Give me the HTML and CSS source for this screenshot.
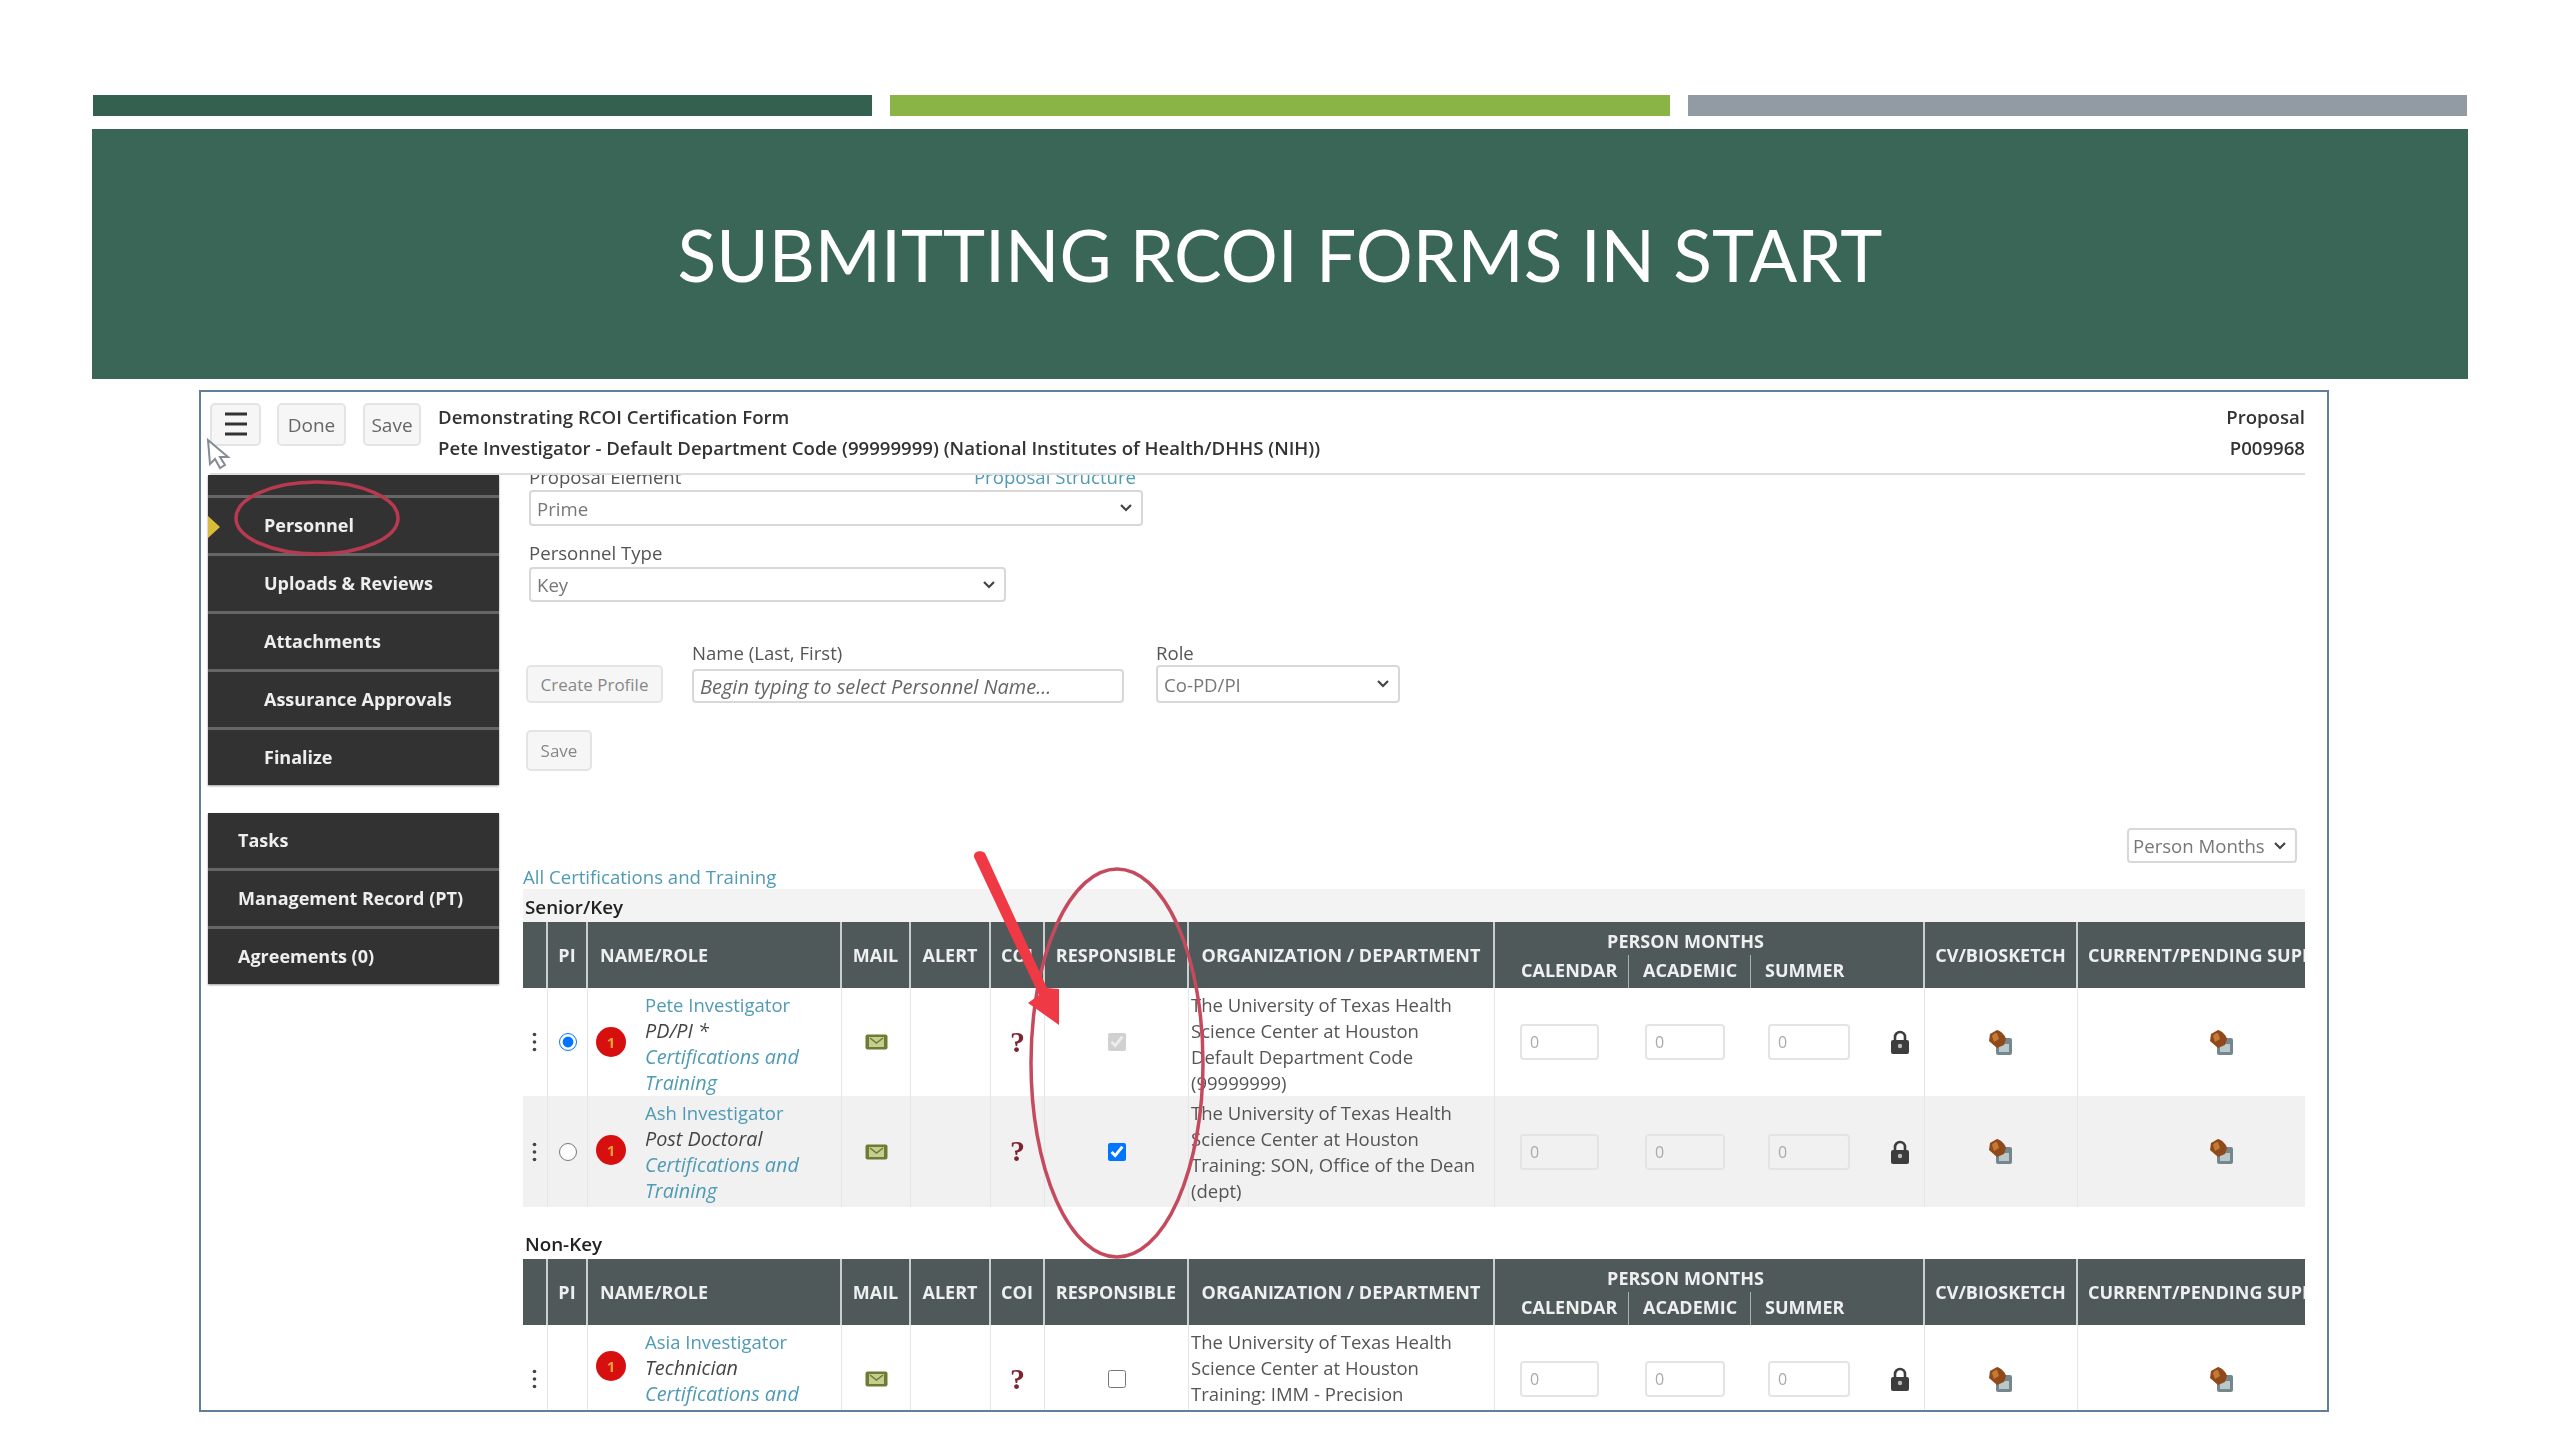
FILE: index.html
```html
<!DOCTYPE html>
<html lang="en">
<head>
    <meta charset="UTF-8">
    <title>Submitting RCOI Forms in START</title>
    <link rel="stylesheet" href="styles.css">
</head>
<body>
<svg class="defs" width="0" height="0">
    <symbol id="dots" viewBox="0 0 6 24"><circle cx="3" cy="3" r="2.2"/><circle cx="3" cy="12" r="2.2"/><circle cx="3" cy="21" r="2.2"/></symbol>
    <symbol id="mail" viewBox="0 0 23 16"><rect x="0.5" y="0.5" width="22" height="15" rx="2" fill="#6f7a35"/><rect x="4" y="3" width="15" height="10" fill="#c3cf8e"/><path d="M5 4l6.500 5 6.500-5" fill="none" stroke="#6f7a35" stroke-width="1.500"/></symbol>
    <symbol id="lock" viewBox="0 0 20 24"><path d="M5 11V7a5 5 0 0 1 10 0v4" fill="none" stroke="#3d3d3d" stroke-width="2.600"/><rect x="1" y="10" width="18" height="14" rx="2" fill="#3d3d3d"/><circle cx="10" cy="16" r="2.200" fill="#bbb"/></symbol>
    <symbol id="bio" viewBox="0 0 25 25"><rect x="7" y="8" width="16" height="17" rx="2" fill="#75878c"/><rect x="10" y="14" width="10" height="8" fill="#b9c8ca"/><path d="M8 0c4 1 8 5 9 9l-2 6-7 3-8-7 1-7z" fill="#8f4a1c"/><path d="M3 6c1-2 3-3 5-3l2 6-5 3z" fill="#c67a35"/></symbol>
</svg>
<div class="slide">
    <div class="bars">
        <div class="bar bar-dark"></div>
        <div class="bar bar-green"></div>
        <div class="bar bar-gray"></div>
    </div>
    <div class="banner"><h1>SUBMITTING RCOI FORMS IN START</h1></div>

    <div class="frame">
        <div class="topbar">
            <button class="btn btn-menu"><svg width="24" height="26" viewBox="0 0 24 26"><path d="M1 3h22M1 13h22M1 23h22" stroke="#333" stroke-width="3"/></svg></button>
            <button class="btn btn-done">Done</button>
            <button class="btn btn-save">Save</button>
            <div class="crumbs">
                <div>Demonstrating RCOI Certification Form</div>
                <div>Pete Investigator - Default Department Code (99999999) (National Institutes of Health/DHHS (NIH))</div>
            </div>
            <div class="crumbs crumbs-right">
                <div>Proposal</div>
                <div>P009968</div>
            </div>
        </div>

        <div class="workspace">
            <div class="sidebar">
                <ul class="nav">
                    <li class="nav-stub"></li>
                    <li class="selected">Personnel</li>
                    <li>Uploads &amp; Reviews</li>
                    <li>Attachments</li>
                    <li>Assurance Approvals</li>
                    <li>Finalize</li>
                </ul>
                <ul class="nav nav-lower">
                    <li>Tasks</li>
                    <li>Management Record (PT)</li>
                    <li>Agreements (0)</li>
                </ul>
            </div>

            <div class="main">
                <div class="form">
                    <div class="label-row">
                        <label>Proposal Element</label>
                        <a href="#">Proposal Structure</a>
                    </div>
                    <select class="select select-element"><option>Prime</option></select>
                    <label class="label-type">Personnel Type</label>
                    <select class="select select-type"><option>Key</option></select>
                    <div class="add-row">
                        <button class="btn btn-profile">Create Profile</button>
                        <div class="field">
                            <label>Name (Last, First)</label>
                            <input class="name-input" placeholder="Begin typing to select Personnel Name...">
                        </div>
                        <div class="field field-role">
                            <label>Role</label>
                            <select class="select select-role"><option>Co-PD/PI</option></select>
                        </div>
                    </div>
                    <button class="btn btn-add">Save</button>
                </div>

                <div class="units"><select class="select select-units"><option>Person Months</option></select></div>
                <a class="all-link" href="#">All Certifications and Training</a>

                <div class="band">Senior/Key</div>
                <table class="people">
                    <colgroup>
                        <col class="c-drag"><col class="c-pi"><col class="c-name"><col class="c-mail"><col class="c-alert"><col class="c-coi"><col class="c-resp"><col class="c-org"><col class="c-cal"><col class="c-aca"><col class="c-sum"><col class="c-lock"><col class="c-cv"><col class="c-cur">
                    </colgroup>
                    <thead>
                        <tr>
                            <th rowspan="2"></th><th rowspan="2">PI</th><th rowspan="2" class="th-name">NAME/ROLE</th><th rowspan="2">MAIL</th><th rowspan="2">ALERT</th><th rowspan="2">COI</th><th rowspan="2">RESPONSIBLE</th><th rowspan="2">ORGANIZATION / DEPARTMENT</th>
                            <th colspan="4" class="th-months">PERSON MONTHS</th>
                            <th rowspan="2">CV/BIOSKETCH</th><th rowspan="2" class="th-cur">CURRENT/PENDING SUPPORT</th>
                        </tr>
                        <tr class="sub">
                            <th class="th-sep">CALENDAR</th><th class="th-sep">ACADEMIC</th><th class="th-plain">SUMMER</th><th class="th-end"></th>
                        </tr>
                    </thead>
                    <tbody>
                        <tr class="row-a">
                            <td class="mid"><svg class="ico-dots"><use href="#dots"/></svg></td>
                            <td class="mid"><input type="radio" name="pi1" checked></td>
                            <td><div class="who"><span class="alert">1</span><div><a href="#">Pete Investigator</a><br><i>PD/PI *</i><br><a class="cert" href="#">Certifications and<br>Training</a></div></div></td>
                            <td class="mid"><svg class="ico-mail"><use href="#mail"/></svg></td>
                            <td></td>
                            <td class="mid"><span class="coi">?</span></td>
                            <td class="mid"><input type="checkbox" checked disabled></td>
                            <td class="org">The University of Texas Health Science Center at Houston<br>Default Department Code (99999999)</td>
                            <td class="mo mo-cal"><input value="0" readonly></td>
                            <td class="mo mo-aca"><input value="0" readonly></td>
                            <td class="mo mo-sum"><input value="0" readonly></td>
                            <td class="mid"><svg class="ico-lock"><use href="#lock"/></svg></td>
                            <td class="mid"><svg class="ico-bio"><use href="#bio"/></svg></td>
                            <td class="mid cur"><svg class="ico-bio"><use href="#bio"/></svg></td>
                        </tr>
                        <tr class="row-b">
                            <td class="mid"><svg class="ico-dots"><use href="#dots"/></svg></td>
                            <td class="mid"><input type="radio" name="pi1"></td>
                            <td><div class="who"><span class="alert">1</span><div><a href="#">Ash Investigator</a><br><i>Post Doctoral</i><br><a class="cert" href="#">Certifications and<br>Training</a></div></div></td>
                            <td class="mid"><svg class="ico-mail"><use href="#mail"/></svg></td>
                            <td></td>
                            <td class="mid"><span class="coi">?</span></td>
                            <td class="mid"><input type="checkbox" checked></td>
                            <td class="org">The University of Texas Health Science Center at Houston<br>Training: SON, Office of the Dean (dept)</td>
                            <td class="mo mo-cal"><input value="0" readonly></td>
                            <td class="mo mo-aca"><input value="0" readonly></td>
                            <td class="mo mo-sum"><input value="0" readonly></td>
                            <td class="mid"><svg class="ico-lock"><use href="#lock"/></svg></td>
                            <td class="mid"><svg class="ico-bio"><use href="#bio"/></svg></td>
                            <td class="mid cur"><svg class="ico-bio"><use href="#bio"/></svg></td>
                        </tr>
                    </tbody>
                </table>

                <div class="band-plain">Non-Key</div>
                <table class="people">
                    <colgroup>
                        <col class="c-drag"><col class="c-pi"><col class="c-name"><col class="c-mail"><col class="c-alert"><col class="c-coi"><col class="c-resp"><col class="c-org"><col class="c-cal"><col class="c-aca"><col class="c-sum"><col class="c-lock"><col class="c-cv"><col class="c-cur">
                    </colgroup>
                    <thead>
                        <tr>
                            <th rowspan="2"></th><th rowspan="2">PI</th><th rowspan="2" class="th-name">NAME/ROLE</th><th rowspan="2">MAIL</th><th rowspan="2">ALERT</th><th rowspan="2">COI</th><th rowspan="2">RESPONSIBLE</th><th rowspan="2">ORGANIZATION / DEPARTMENT</th>
                            <th colspan="4" class="th-months">PERSON MONTHS</th>
                            <th rowspan="2">CV/BIOSKETCH</th><th rowspan="2" class="th-cur">CURRENT/PENDING SUPPORT</th>
                        </tr>
                        <tr class="sub">
                            <th class="th-sep">CALENDAR</th><th class="th-sep">ACADEMIC</th><th class="th-plain">SUMMER</th><th class="th-end"></th>
                        </tr>
                    </thead>
                    <tbody>
                        <tr class="row-a">
                            <td class="mid"><svg class="ico-dots"><use href="#dots"/></svg></td>
                            <td class="mid"></td>
                            <td><div class="who"><span class="alert">1</span><div><a href="#">Asia Investigator</a><br><i>Technician</i><br><a class="cert" href="#">Certifications and</a></div></div></td>
                            <td class="mid"><svg class="ico-mail"><use href="#mail"/></svg></td>
                            <td></td>
                            <td class="mid"><span class="coi">?</span></td>
                            <td class="mid"><input type="checkbox"></td>
                            <td class="org">The University of Texas Health Science Center at Houston<br>Training: IMM - Precision</td>
                            <td class="mo mo-cal"><input value="0" readonly></td>
                            <td class="mo mo-aca"><input value="0" readonly></td>
                            <td class="mo mo-sum"><input value="0" readonly></td>
                            <td class="mid"><svg class="ico-lock"><use href="#lock"/></svg></td>
                            <td class="mid"><svg class="ico-bio"><use href="#bio"/></svg></td>
                            <td class="mid cur"><svg class="ico-bio"><use href="#bio"/></svg></td>
                        </tr>
                    </tbody>
                </table>
            </div>
        </div>
    </div>

    <!-- hand drawn marks from the slide, same coordinates as the page -->
    <svg class="marks" viewBox="0 0 2560 1440">
        <ellipse cx="317" cy="518" rx="81" ry="36" fill="none" stroke="#b93a50" stroke-width="3.500"/>
        <ellipse cx="1117" cy="1063" rx="86" ry="194" fill="none" stroke="#c64a5e" stroke-width="3.500"/>
        <path d="M974 857c-1-5 6-8 11-4l62 135 12 1v36l-31-22 11-8z" fill="#ef3a45"/>
        <path d="M208 440l2 24 5-5 5 9 5-3-5-8h8z" fill="#fff" stroke="#858b92" stroke-width="2"/>
    </svg>
</div>
</body>
</html>
```

FILE: styles.css
```css
* {
    margin: 0;
    padding: 0;
    box-sizing: border-box;
}
ul,li {
    list-style-type: none;
}
body {
    background: #fff;
    font-family: "Open Sans", "Liberation Sans", sans-serif;
    color: #444;
}
.defs {
    position: absolute;
}
.slide {
    position: relative;
    width: 2560px;
    height: 1440px;
    padding-top: 95px;
    overflow: hidden;
    filter: blur(0.7px);
}
/*top stripes*/
.bars {
    display: flex;
    gap: 18px;
    padding: 0 93px;
}
.bar {
    flex: 1;
    height: 21px;
}
.bar-dark { background: #33604f; }
.bar-green { background: #8ab446; }
.bar-gray { background: #929ba3; }

.banner {
    display: flex;
    align-items: center;
    justify-content: center;
    margin: 13px 92px 0;
    height: 250px;
    background: #396656;
}
.banner h1 {
    font-family: "Lato", "Liberation Sans", sans-serif;
    font-weight: 400;
    font-size: 71.3px;
    color: #fff;
    white-space: nowrap;
}

/*screenshot frame*/
.frame {
    margin: 11px 0 0 199px;
    width: 2130px;
    height: 1022px;
    border: 2px solid #5f7f9a;
    overflow: hidden;
    background: #fff;
}
.topbar {
    position: relative;
    z-index: 2;
    display: flex;
    align-items: flex-start;
    height: 83px;
    margin: 0 22px 0 9px;
    padding-top: 11px;
    border-bottom: 2px solid #dedede;
    background: #fff;
}
.btn {
    height: 43px;
    border: 2px solid #e4e4e4;
    border-radius: 5px;
    background: #f6f6f6;
    font-family: inherit;
    font-size: 19px;
    color: #666;
}
.btn-menu { width: 51px; padding-top: 4px; }
.btn-done { width: 69px; margin-left: 16px; }
.btn-save { width: 58px; margin-left: 17px; }
.crumbs {
    margin: -2px 0 0 17px;
    font-size: 18.6px;
    font-weight: 600;
    line-height: 31px;
    color: #333;
}
.crumbs-right {
    margin-left: auto;
    text-align: right;
}

.workspace {
    display: grid;
    grid-template-columns: 298px 1fr;
}
/*left menu*/
.sidebar {
    padding-left: 7px;
}
.nav {
    background: #323232;
    color: #eee;
    font-size: 18px;
    font-weight: 700;
    box-shadow: 0 1px 2px #999;
}
.nav li {
    position: relative;
    display: flex;
    align-items: center;
    height: 58px;
    padding: 0 0 2px 56px;
    border-top: 3px solid #666;
}
.nav .nav-stub {
    height: 20px;
    border-top: 0;
}
.nav .selected::before {
    content: "";
    position: absolute;
    left: 0;
    top: 18px;
    border-left: 12px solid #d8bd3a;
    border-top: 11px solid transparent;
    border-bottom: 11px solid transparent;
}
.nav-lower {
    margin-top: 28px;
}
.nav-lower li {
    padding-left: 30px;
}
.nav-lower li:first-child {
    height: 55px;
    border-top: 0;
}

/*form area*/
.main {
    min-width: 0;
    padding: 0 22px 0 24px;
    overflow: hidden;
}
.form {
    padding-left: 6px;
    font-size: 18.6px;
    line-height: 20px;
    color: #555;
}
.form a, .all-link {
    color: #4f9ab5;
    text-decoration: none;
}
.label-row {
    display: flex;
    justify-content: space-between;
    width: 608px;
    margin-top: -8px;
    padding-right: 1px;
}
.select {
    display: block;
    appearance: none;
    padding-left: 6px;
    border: 2px solid #d8d8d8;
    border-radius: 4px;
    background: #fff url("data:image/svg+xml,%3Csvg xmlns='http://www.w3.org/2000/svg' width='12' height='8'%3E%3Cpath d='M1 1l5 5 5-5' fill='none' stroke='%23444' stroke-width='2.200'/%3E%3C/svg%3E") no-repeat right 9px center;
    font-family: inherit;
    font-size: 18.6px;
    color: #777;
}
.select-element { width: 614px; height: 36px; margin-top: 3px; }
.label-type { display: block; margin-top: 17px; }
.select-type { width: 477px; height: 35px; margin-top: 4px; }
.add-row {
    display: flex;
    align-items: flex-end;
    margin-top: 41px;
}
.field label {
    display: block;
    margin-bottom: 6px;
}
.btn-profile {
    width: 137px;
    height: 38px;
    margin: 0 29px 0 -3px;
    font-size: 17px;
    color: #888;
}
.name-input {
    display: block;
    width: 432px;
    height: 34px;
    padding-left: 6px;
    border: 2px solid #d8d8d8;
    border-radius: 4px;
    font-family: inherit;
    font-size: 20px;
    font-style: italic;
}
.name-input::placeholder {
    color: #666;
    opacity: 1;
}
.field-role { margin-left: 32px; }
.field-role label { margin-bottom: 2px; }
.select-role { width: 244px; height: 38px; }
.btn-add {
    display: block;
    width: 66px;
    height: 41px;
    margin: 27px 0 0 -3px;
    font-size: 17px;
    color: #888;
}
.units {
    display: flex;
    justify-content: flex-end;
    margin: 57px 8px 0 0;
}
.select-units { width: 170px; height: 35px; padding-left: 4px; }
.all-link {
    display: block;
    margin-top: 4px;
    font-size: 18.6px;
    line-height: 20px;
}
.band {
    height: 33px;
    margin-top: 2px;
    padding: 8px 0 0 2px;
    background: #f3f3f3;
    font-size: 18.8px;
    font-weight: 600;
    line-height: 20px;
    color: #222;
}
.band-plain {
    height: 25px;
    margin-top: 27px;
    padding-left: 2px;
    font-size: 18.8px;
    font-weight: 600;
    line-height: 20px;
    color: #222;
}

/*personnel tables*/
.people {
    table-layout: fixed;
    width: 1782px;
    border-collapse: separate;
    border-spacing: 0;
    font-size: 18.5px;
    line-height: 26px;
}
.c-drag { width: 25px; }
.c-pi { width: 40px; }
.c-name { width: 254px; }
.c-mail { width: 69px; }
.c-alert { width: 80px; }
.c-coi { width: 54px; }
.c-resp { width: 144px; }
.c-org { width: 306px; }
.c-cal { width: 134px; }
.c-aca { width: 122px; }
.c-sum { width: 125px; }
.c-lock { width: 49px; }
.c-cv { width: 153px; }
.c-cur { width: 227px; }
.people th {
    background: #4f5959;
    color: #eef0f0;
    font-size: 18px;
    font-weight: 700;
    line-height: 20px;
    white-space: nowrap;
    overflow: hidden;
    border-right: 2px solid #c9cfcf;
}
.people th:last-child {
    border-right: 0;
}
.people .sub th {
    height: 33px;
    text-align: left;
    padding: 0 0 4px 26px;
    border-right: 0;
}
.people .sub th + th {
    padding-left: 14px;
}
.people .th-sep {
    box-shadow: inset -1px 0 0 #a8b0b0;
}
.people .sub .th-end {
    border-right: 2px solid #c9cfcf;
}
.people .th-months {
    height: 33px;
    padding-top: 4px;
    padding-right: 47px;
    border-right: 2px solid #c9cfcf;
}
.people .th-name {
    text-align: left;
    padding-left: 12px;
}
.people .th-cur {
    text-align: left;
    padding-left: 10px;
}
.people td {
    vertical-align: top;
    padding-top: 4px;
    border-right: 1px solid #e6e6e6;
    overflow: hidden;
}
.people td:last-child {
    border-right: 0;
}
.row-a { height: 108px; }
.row-b { height: 111px; background: #f1f1f1; }
.people .mid {
    vertical-align: middle;
    padding-top: 0;
    text-align: center;
}
.people .cur {
    padding-left: 62px;
}
.who {
    display: flex;
    align-items: center;
    gap: 19px;
    padding-left: 8px;
}
.who a {
    color: #4f9ab5;
    text-decoration: none;
}
.who .cert, .who i {
    font-size: 19.8px;
    font-style: italic;
}
.who i {
    color: #444;
}
.alert {
    flex: none;
    width: 30px;
    height: 30px;
    margin-top: -4px;
    border-radius: 50%;
    background: #d80f0f;
    color: #e8a23a;
    font-size: 15px;
    font-weight: 700;
    line-height: 30px;
    text-align: center;
}
.coi {
    font-family: "Liberation Serif", serif;
    font-size: 30px;
    font-weight: 700;
    line-height: 30px;
    color: #7d2433;
}
.org {
    padding-left: 2px;
    color: #555;
}
.people .mo {
    vertical-align: middle;
    padding-top: 0;
    border-right: 0;
}
.mo input {
    display: block;
    height: 36px;
    padding-left: 8px;
    border: 2px solid #e4e4e4;
    border-radius: 4px;
    background: transparent;
    font-family: inherit;
    font-size: 16px;
    color: #aaa;
}
.mo-cal input { width: 79px; margin-left: 25px; }
.mo-aca input { width: 80px; margin-left: 16px; }
.mo-sum input { width: 82px; margin-left: 17px; }
.people input[type="checkbox"], .people input[type="radio"] {
    display: block;
    width: 18px;
    height: 18px;
    margin: 0 auto;
}
.ico-dots { display: block; width: 5px; height: 22px; margin: 0 auto; fill: #444; transform: translateX(-1px); }
.ico-mail { display: block; width: 23px; height: 16px; margin: 0 auto; }
.ico-lock { display: block; width: 20px; height: 24px; margin: 0 auto; }
.ico-bio { display: block; width: 25px; height: 25px; margin: 0 auto; }

.marks {
    position: absolute;
    z-index: 3;
    left: 0;
    top: 0;
    width: 2560px;
    height: 1440px;
    pointer-events: none;
}
```
